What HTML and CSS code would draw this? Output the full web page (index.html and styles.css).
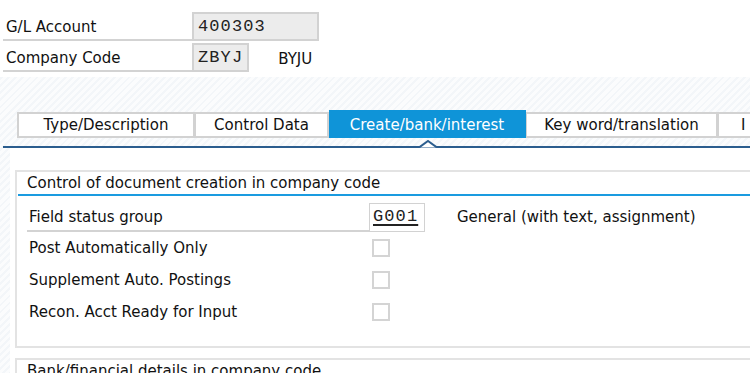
FILE: index.html
```html
<!DOCTYPE html>
<html lang="en">
<head>
  <meta charset="UTF-8">
  <title>Change G/L Account Centrally</title>
  <link rel="stylesheet" href="styles.css">
</head>
<body>

<div class="header">
  <div class="hrow">
    <div class="hlabel">G/L Account</div>
    <div class="field wide">400303</div>
  </div>
  <div class="hrow">
    <div class="hlabel">Company Code</div>
    <div class="field">ZBYJ</div>
    <div class="htext">BYJU</div>
  </div>
</div>

<div class="tabstrip">
  <div class="tab t1">Type/Description</div>
  <div class="tab t2">Control Data</div>
  <div class="tab t3 active">Create/bank/interest</div>
  <div class="tab t4">Key word/translation</div>
  <div class="tab t5">I</div>
</div>
<div class="tabline">
  <svg class="caret" width="18" height="8" viewBox="0 0 18 8">
    <polyline points="0,7.5 9,1 18,7.5" fill="#fff" stroke="#2b5d8e" stroke-width="2"/>
  </svg>
</div>

<div class="content">
  <div class="group">
    <div class="gtitle">Control of document creation in company code</div>
    <div class="grow first">
      <div class="glabel">Field status group</div>
      <div class="field code"><u>G001</u></div>
      <div class="gdesc">General (with text, assignment)</div>
    </div>
    <div class="grow">
      <div class="glabel plain">Post Automatically Only</div>
      <div class="check"></div>
    </div>
    <div class="grow">
      <div class="glabel plain">Supplement Auto. Postings</div>
      <div class="check"></div>
    </div>
    <div class="grow">
      <div class="glabel plain">Recon. Acct Ready for Input</div>
      <div class="check"></div>
    </div>
  </div>

  <div class="group second">
    <div class="gtitle">Bank/financial details in company code</div>
  </div>
</div>

</body>
</html>
```

FILE: styles.css
```css
body {
    margin: 0;
    padding: 0;
    width: 750px;
    height: 373px;
    overflow: hidden;
    font-family: Tahoma, "DejaVu Sans", sans-serif;
    font-size: 15px;
    color: #111;
    background: repeating-linear-gradient(135deg, #f3f6f9 0 2px, #fbfcfd 2px 5px);
}

.header {
    background: #fff;
    padding: 12px 0 3px 3px;
}

.hrow {
    display: flex;
    align-items: flex-end;
    height: 29px;
    margin-bottom: 2px;
}

.hlabel {
    width: 186px;
    height: 27px;
    line-height: 31px;
    padding-left: 3px;
    border-bottom: 2px solid #d3d3d3;
}

.field {
    box-sizing: border-box;
    height: 29px;
    padding: 0 4px;
    line-height: 26px;
    background: #ececec;
    border: 2px solid #d2d2d2;
    font-family: "Liberation Mono", monospace;
    font-size: 17px;
    letter-spacing: 1.1px;
    color: #222;
}

.field.wide {
    width: 127px;
}

.htext {
    margin-left: 29px;
    padding-top: 3px;
    line-height: 29px;
    align-self: center;
}

.tabstrip {
    display: flex;
    align-items: flex-end;
    margin: 33px 0 0 17px;
    height: 28px;
    overflow: hidden;
}

.tab {
    flex-shrink: 0;
    box-sizing: border-box;
    height: 26px;
    line-height: 22px;
    text-align: center;
    background: #fff;
    border: 2px solid #d2d2d2;
    border-left-width: 1px;
    white-space: nowrap;
    overflow: hidden;
}

.t1 { width: 178px; border-left-width: 2px; }
.t2 { width: 134px; }
.t3 { width: 197px; }
.t4 { width: 192px; }
.t5 { width: 40px; text-align: left; padding-left: 22px; }

.tab.active {
    height: 28px;
    line-height: 26px;
    background: #0f94d8;
    border-color: #0f94d8;
    color: #fff;
}

.tabline {
    position: relative;
    margin: 8px 0 0 3px;
    height: 2px;
    background: #2b5d8e;
}

.caret {
    position: absolute;
    left: 416px;
    top: -6px;
}

.content {
    background: #fff;
    margin-left: 10px;
    padding: 22px 0 0 5px;
    height: 210px;
}

.group {
    border: 2px solid #e3e3e3;
    border-right: none;
    height: 174px;
}

.group.second {
    margin-top: 10px;
    height: 40px;
}

.gtitle {
    margin-left: 1px;
    padding-left: 9px;
    height: 22px;
    line-height: 23px;
    border-bottom: 2px solid #1a9be0;
}

.grow {
    display: flex;
    align-items: center;
    height: 32px;
    padding-left: 10px;
}

.grow.first {
    height: 35px;
    margin-top: 1px;
    align-items: flex-end;
}

.glabel {
    width: 340px;
    padding-left: 2px;
}

.grow.first .glabel {
    height: 27px;
    line-height: 28px;
    border-bottom: 2px solid #d3d3d3;
}

.field.code {
    width: 56px;
    background: #fff;
    border: 1px solid #d2d2d2;
    padding: 0 3px;
}

.field.code u {
    text-decoration-thickness: 2px;
    text-underline-offset: 3px;
}

.gdesc {
    margin-left: 32px;
    align-self: center;
    line-height: 27px;
    padding-top: 6px;
}

.check {
    box-sizing: border-box;
    width: 18px;
    height: 18px;
    margin-left: 3px;
    border: 2px solid #d4d4d4;
    background: #fff;
}
```
